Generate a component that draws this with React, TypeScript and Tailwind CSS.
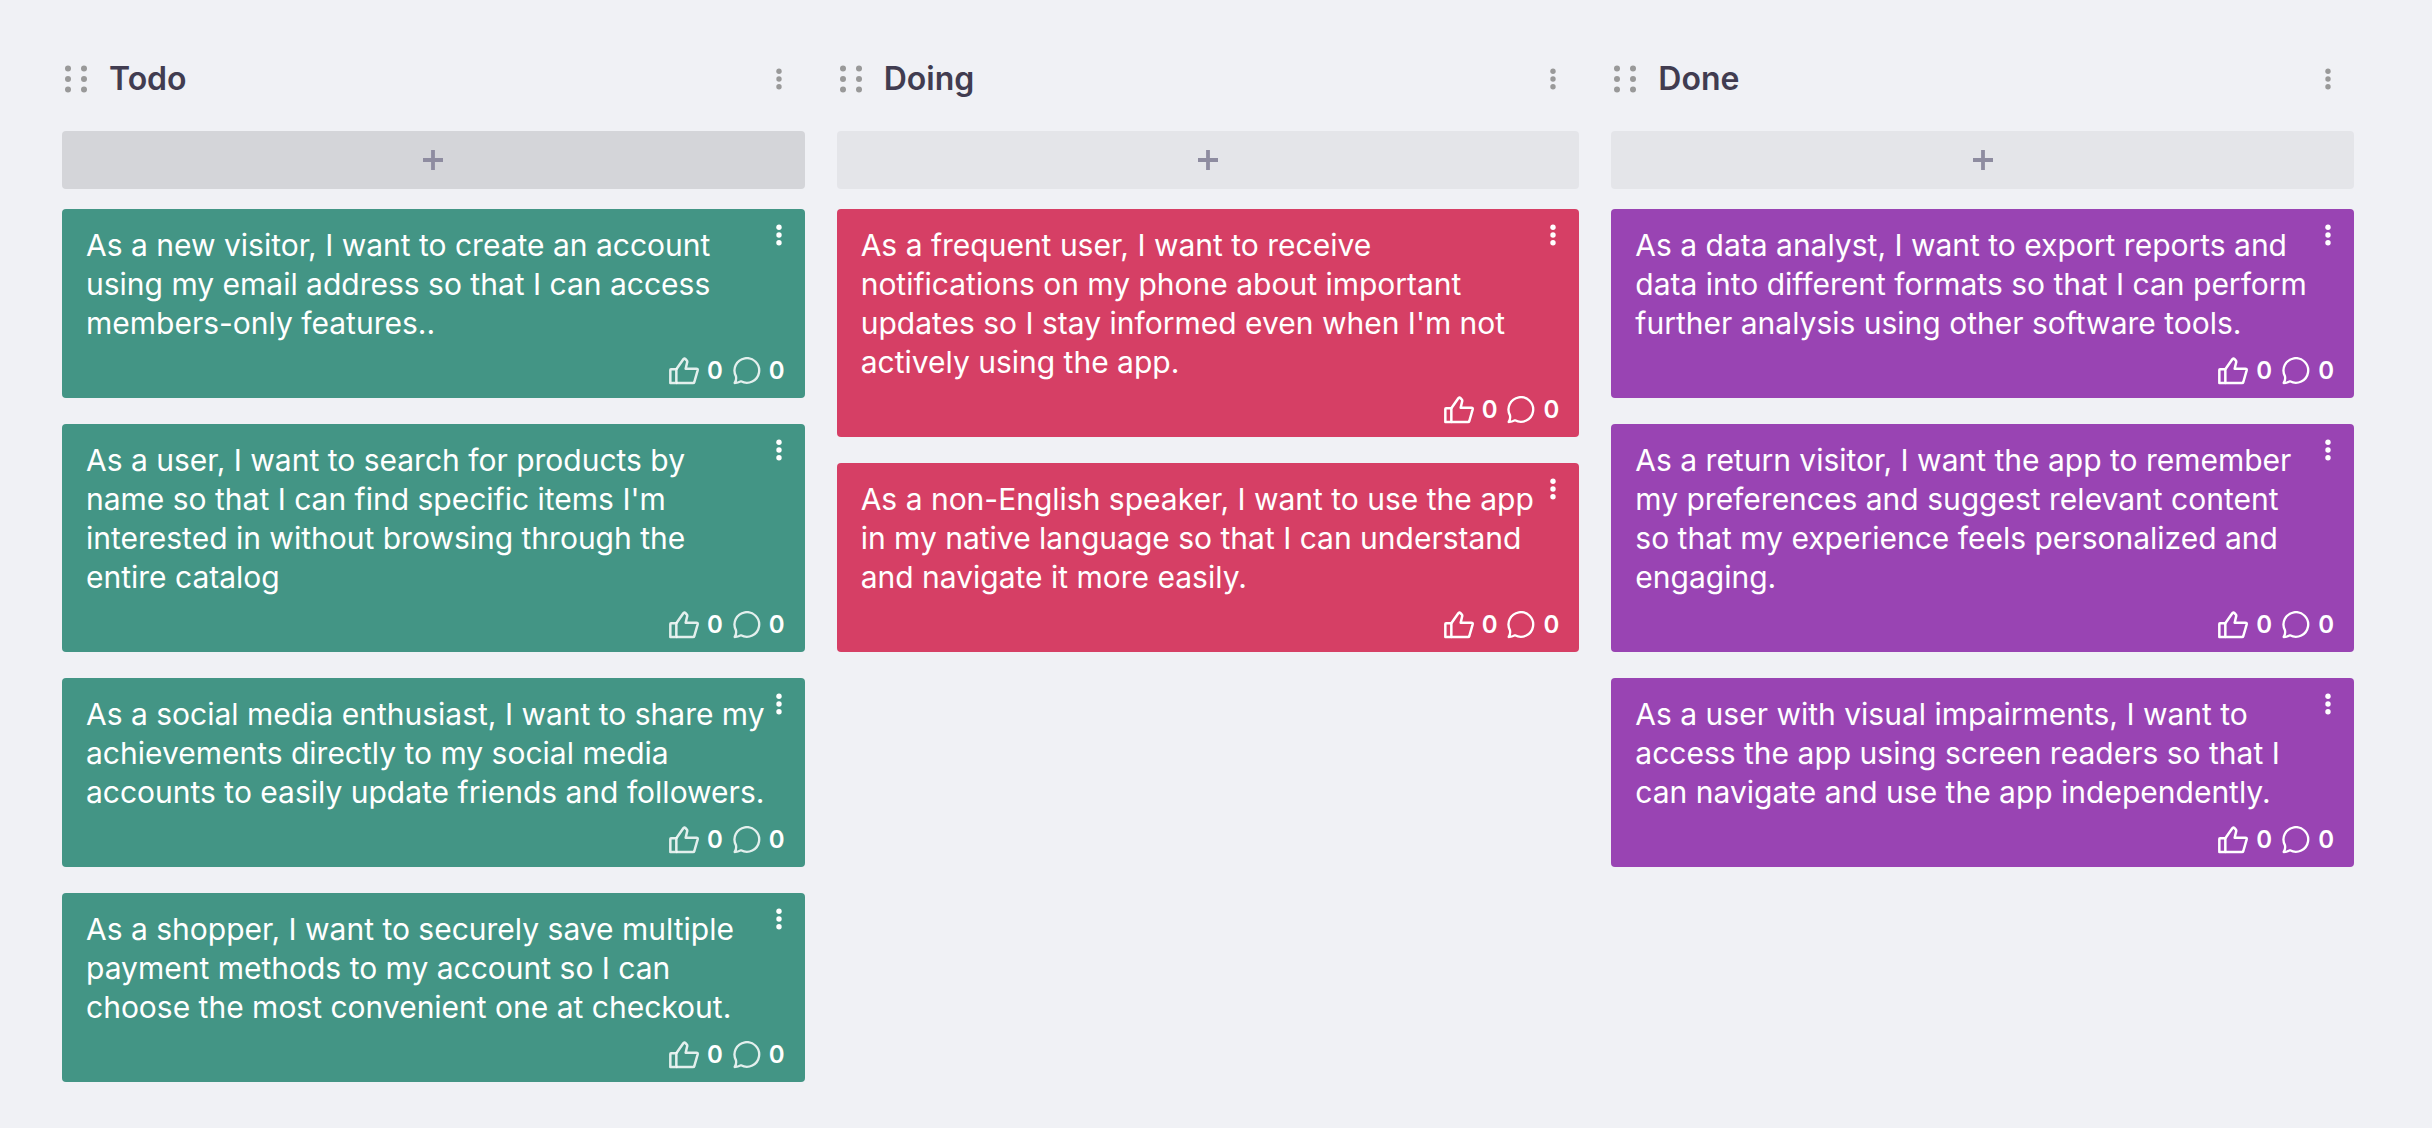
import { clsx } from "clsx";

const columns = [
	{
		title: "Todo",
		color: "bg-[#439585]",
		addColor: "bg-[#d4d5d9]",
		iconColor: "text-white/85",
		cards: [
			"As a new visitor, I want to create an account using my email address so that I can access members-only features..",
			"As a user, I want to search for products by name so that I can find specific items I'm interested in without browsing through the entire catalog",
			"As a social media enthusiast, I want to share my achievements directly to my social media accounts to easily update friends and followers.",
			"As a shopper, I want to securely save multiple payment methods to my account so I can choose the most convenient one at checkout.",
		],
	},
	{
		title: "Doing",
		color: "bg-[#d63f65]",
		addColor: "bg-[#e4e5e9]",
		iconColor: "text-white",
		cards: [
			"As a frequent user, I want to receive notifications on my phone about important updates so I stay informed even when I'm not actively using the app.",
			"As a non-English speaker, I want to use the app in my native language so that I can understand and navigate it more easily.",
		],
	},
	{
		title: "Done",
		color: "bg-[#9944b3]",
		addColor: "bg-[#e4e5e9]",
		iconColor: "text-white",
		cards: [
			"As a data analyst, I want to export reports and data into different formats so that I can perform further analysis using other software tools.",
			"As a return visitor, I want the app to remember my preferences and suggest relevant content so that my experience feels personalized and engaging.",
			"As a user with visual impairments, I want to access the app using screen readers so that I can navigate and use the app independently.",
		],
	},
];

type ColumnData = (typeof columns)[number];

export default function App() {
	return (
		<main className="min-h-screen bg-[#f0f1f5] pt-[47px] pr-[78px] pb-[46px] pl-[62px] font-['Inter',sans-serif]">
			<div className="grid grid-cols-3 items-start gap-8">
				{columns.map((column) => (
					<Column key={column.title} column={column} />
				))}
			</div>
		</main>
	);
}

function Column({ column }: { column: ColumnData }) {
	return (
		<section>
			{/* Column header */}
			<header className="mb-5 flex h-16 items-center pr-3.5 pl-[3px]">
				<button aria-label={`Move ${column.title}`} className="cursor-grab text-[#999999]">
					<GripIcon />
				</button>
				<h2 className="ml-[22px] flex-1 text-[32px] leading-10 font-semibold text-[#413c50]">{column.title}</h2>
				<button aria-label={`${column.title} options`} className="flex h-7 w-6 items-center justify-center text-[#999999]">
					<DotsIcon />
				</button>
			</header>

			<button
				aria-label={`Add card to ${column.title}`}
				className={clsx("mb-5 flex h-[58px] w-full items-center justify-center rounded text-[#8e8ca0]", column.addColor)}
			>
				<PlusIcon />
			</button>

			{/* Cards */}
			<ul className="space-y-[26px]">
				{column.cards.map((text) => (
					<li key={text} className={clsx("relative rounded pt-[17px] pb-[13px] text-white", column.color)}>
						<p className="pr-[38px] pl-6 text-[30px] leading-[39px]">{text}</p>
						<button aria-label="Card options" className="absolute top-3 right-3.5 flex h-7 w-6 items-center justify-center">
							<DotsIcon />
						</button>
						<CardStats iconColor={column.iconColor} />
					</li>
				))}
			</ul>
		</section>
	);
}

function CardStats({ iconColor }: { iconColor: string }) {
	return (
		<div className="mt-3.5 flex h-7 items-center justify-end gap-2.5 pr-5 text-[24px] leading-7 font-semibold">
			<button aria-label="Likes" className="flex items-center gap-2">
				<ThumbIcon className={iconColor} />
				<span>0</span>
			</button>
			<button aria-label="Comments" className="flex items-center gap-2">
				<CommentIcon className={iconColor} />
				<span>0</span>
			</button>
		</div>
	);
}

function GripIcon() {
	return (
		<svg width="22" height="28" viewBox="0 0 22 28" fill="currentColor">
			{[3.5, 14, 24.5].map((y) => (
				<g key={y}>
					<circle cx="3" cy={y} r="3" />
					<circle cx="19" cy={y} r="3" />
				</g>
			))}
		</svg>
	);
}

function DotsIcon() {
	return (
		<svg width="6" height="22" viewBox="0 0 6 22" fill="currentColor">
			<circle cx="3" cy="3.2" r="2.7" />
			<circle cx="3" cy="11" r="2.7" />
			<circle cx="3" cy="18.8" r="2.7" />
		</svg>
	);
}

function PlusIcon() {
	return (
		<svg width="22" height="22" viewBox="0 0 22 22" stroke="currentColor" strokeWidth="3.8">
			<path d="M11 1v20M1 11h20" />
		</svg>
	);
}

function ThumbIcon({ className }: { className: string }) {
	return (
		<svg
			className={className}
			width="30"
			height="28"
			viewBox="0 0 90 84"
			fill="none"
			stroke="currentColor"
			strokeWidth="7.5"
			strokeLinejoin="round"
		>
			<path d="M6 37H22V78H4V39Q4 37 6 37Z" />
			<path d="M22 37L43 7Q46 3 49 6L53 10Q56 13 54 18L50 35H82Q87 35 86 40L76 75Q75 78 72 78H22" />
		</svg>
	);
}

function CommentIcon({ className }: { className: string }) {
	return (
		<svg
			className={className}
			width="28"
			height="28"
			viewBox="0 0 84 84"
			fill="none"
			stroke="currentColor"
			strokeWidth="7"
			strokeLinejoin="round"
		>
			<path d="M9 58A37 37 0 1 1 24 73Q15 78 5 78Q11 70 9 58Z" />
		</svg>
	);
}
